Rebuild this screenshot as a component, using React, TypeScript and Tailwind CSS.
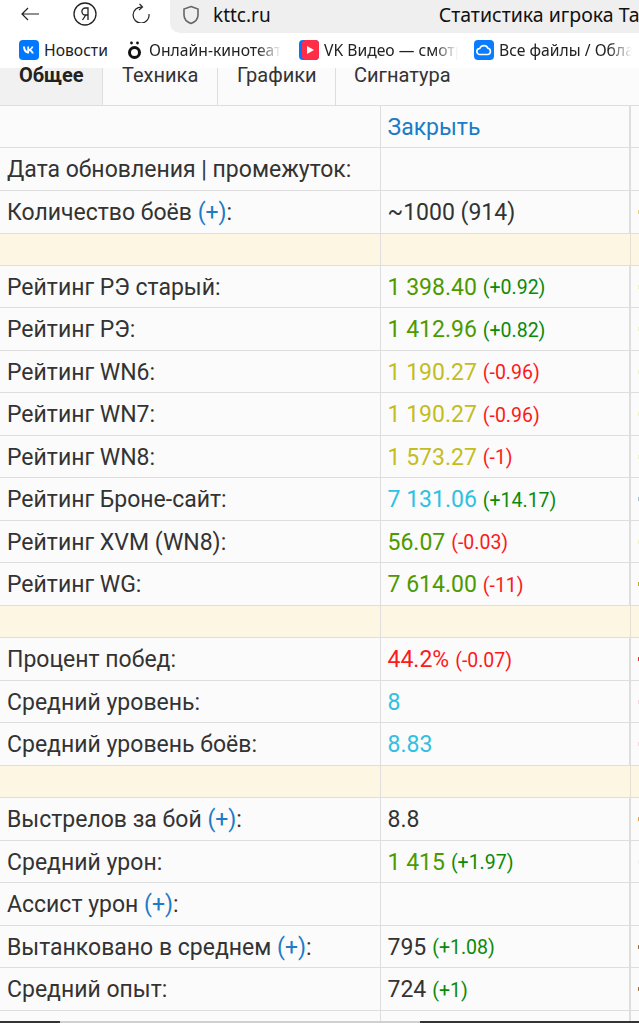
import React from "react";

const Plus = () => <span className="text-[#1c7cc7]">(+)</span>;

type Row = { label?: React.ReactNode; value?: React.ReactNode; delta?: string; color?: string; deltaColor?: string; h: string; sep?: boolean; edge?: string };

const G = "text-[#4c9a00]", Y = "text-[#c4bd22]", C = "text-[#2fc1e2]", R = "text-[#fc1a1a]", DG = "text-[#0a8a0a]", DR = "text-[#fc1a1a]";

const rows: Row[] = [
  { label: "Дата обновления | промежуток:", h: "h-[43px]" },
  { label: <>Количество боёв <Plus />:</>, value: "~1000 (914)", h: "h-[43px]", edge: "bg-[#f0d080]" },
  { sep: true, h: "h-[32px]" },
  { label: "Рейтинг РЭ старый:", value: "1 398.40", color: G, delta: "(+0.92)", deltaColor: DG, h: "h-[42px]", edge: "bg-[#f5efc0]" },
  { label: "Рейтинг РЭ:", value: "1 412.96", color: G, delta: "(+0.82)", deltaColor: DG, h: "h-[43px]", edge: "bg-[#f5efc0]" },
  { label: "Рейтинг WN6:", value: "1 190.27", color: Y, delta: "(-0.96)", deltaColor: DR, h: "h-[42px]", edge: "bg-[#f5efc0]" },
  { label: "Рейтинг WN7:", value: "1 190.27", color: Y, delta: "(-0.96)", deltaColor: DR, h: "h-[43px]", edge: "bg-[#f5efc0]" },
  { label: "Рейтинг WN8:", value: "1 573.27", color: Y, delta: "(-1)", deltaColor: DR, h: "h-[42px]", edge: "bg-[#f5efc0]" },
  { label: "Рейтинг Броне-сайт:", value: "7 131.06", color: C, delta: "(+14.17)", deltaColor: DG, h: "h-[43px]", edge: "bg-[#a5c5d0]" },
  { label: "Рейтинг XVM (WN8):", value: "56.07", color: G, delta: "(-0.03)", deltaColor: DR, h: "h-[42px]", edge: "bg-[#f5efc0]" },
  { label: "Рейтинг WG:", value: "7 614.00", color: G, delta: "(-11)", deltaColor: DR, h: "h-[43px]", edge: "bg-[#b5b020]" },
  { sep: true, h: "h-[32px]" },
  { label: "Процент побед:", value: "44.2%", color: R, delta: "(-0.07)", deltaColor: DR, h: "h-[43px]", edge: "bg-[#f03030]" },
  { label: "Средний уровень:", value: "8", color: C, h: "h-[42px]", edge: "bg-[#fbd5dc]" },
  { label: "Средний уровень боёв:", value: "8.83", color: C, h: "h-[43px]", edge: "bg-[#fbd5dc]" },
  { sep: true, h: "h-[32px]" },
  { label: <>Выстрелов за бой <Plus />:</>, value: "8.8", h: "h-[43px]", edge: "bg-[#e8a050]" },
  { label: "Средний урон:", value: "1 415", color: G, delta: "(+1.97)", deltaColor: DG, h: "h-[42px]", edge: "bg-[#f7efe5]" },
  { label: <>Ассист урон <Plus />:</>, h: "h-[43px]" },
  { label: <>Вытанковано в среднем <Plus />:</>, value: "795", delta: "(+1.08)", deltaColor: DG, h: "h-[42px]", edge: "bg-[#a07040]" },
  { label: "Средний опыт:", value: "724", delta: "(+1)", deltaColor: DG, h: "h-[43px]", edge: "bg-[#a07040]" },
];

const Cells = ({ r }: { r: Row }) => (
  <div className={`flex ${r.h} shrink-0 border-b border-[#dedede] ${r.sep ? "bg-[#fdf6e3]" : "bg-[#fbfbfb]"}`}>
    <div className="flex w-[381px] shrink-0 items-center border-r border-[#dedede] pl-[7px] pt-[3px] text-[#333]">
      <span>{r.label}</span>
    </div>
    <div className={`flex w-[250px] shrink-0 items-center gap-[6px] pl-[7px] pt-[3px] text-[#333] ${r.sep ? "border-r border-[#e2dfd2]" : "border-r-2 border-[#dedede]"}`}>
      <span className={`-ml-[0.5px] ${r.color ?? ""}`}>{r.value}</span>
      {r.delta && <span className={`text-[19.500px] ${r.deltaColor}`}>{r.delta}</span>}
    </div>
    <div className="flex flex-1 items-center justify-end">
      {r.edge && <div className={`h-[4px] w-[1px] ${r.edge}`} />}
    </div>
  </div>
);

const Bookmark = ({ icon, text, w, gap, fade }: { icon: React.ReactNode; text: string; w: string; gap: string; fade?: boolean }) => (
  <div className={`flex ${w} shrink-0 items-center ${gap} overflow-hidden whitespace-nowrap`}>
    {icon}
    <span className={`min-w-0 overflow-hidden text-[#222] ${fade ? "[mask-image:linear-gradient(to_right,black_82%,transparent)]" : ""}`}>{text}</span>
  </div>
);

const Tab = ({ children, active, w }: { children: React.ReactNode; active?: boolean; w: string }) => (
  <div className={`${w} shrink-0 border-r border-[#dedede] pl-[19px] ${active ? "bg-[#f1f1f1] font-bold text-[#222]" : "text-[#333]"}`}>{children}</div>
);

export default function App() {
  return (
    <div className="flex h-[1023px] w-[639px] flex-col overflow-hidden bg-white font-['Roboto',sans-serif] text-[23px]">
      <div className="flex h-[33px] shrink-0 items-start bg-white">
        <svg width="18" height="14" viewBox="0 0 18 14" fill="none" stroke="#222" strokeWidth="1.2" className="ml-[21px] mt-[7px] shrink-0">
          <path d="M18 7H1M7 1L1 7l6 6" />
        </svg>
        <svg width="24" height="24" viewBox="0 0 24 24" fill="none" stroke="#222" strokeWidth="1.3" className="ml-[34px] mt-[2px] shrink-0">
          <circle cx="12" cy="12" r="11" />
          <path d="M15 18V6h-2.600a3.400 3.400 0 0 0 0 7H15M12.800 13L9.500 18" />
        </svg>
        <svg width="20" height="20" viewBox="0 0 20 20" fill="none" stroke="#222" strokeWidth="1.2" className="ml-[34px] mt-[3px] shrink-0">
          <path d="M11 4.100A8 8 0 1 0 18 11" />
          <path d="M8.500 0.800L11.500 4L8 7" />
        </svg>
        <div className="ml-[19px] flex h-[33px] min-w-0 flex-1 items-center overflow-hidden whitespace-nowrap rounded-bl-[10px] bg-[#efefef] pb-[3px] font-['Noto_Sans',sans-serif] text-[19px] text-[#111]">
          <svg width="18" height="20" viewBox="0 0 18 20" fill="none" stroke="#666" strokeWidth="1.6" className="ml-[12px] shrink-0">
            <path d="M9 1.500l7 2.500v6c0 4-3 7-7 8.500c-4-1.500-7-4.500-7-8.500V4z" />
          </svg>
          <span className="ml-[13px]">kttc.ru</span>
          <span className="ml-[168px] text-[19.500px]">Статистика игрока Та</span>
        </div>
      </div>
      <div className="flex h-[35px] shrink-0 items-center bg-white pl-[19px] font-['Noto_Sans',sans-serif] text-[15.700px]">
        <Bookmark
          w="w-[108px]"
          gap="gap-[5px]"
          text="Новости"
          icon={
            <svg width="20" height="20" viewBox="0 0 20 20" className="shrink-0">
              <rect width="20" height="20" rx="4" fill="#0077ff" />
              <path d="M4 6.500h2c.2 3 1.300 4.200 2.300 4.500V6.500h1.800V9c1-.1 2-1.200 2.500-2.500h1.800c-.3 1.600-1.500 2.800-2.400 3.300.9.400 2.200 1.500 2.800 3.700h-2c-.4-1.300-1.500-2.400-2.700-2.500v2.500h-.3C6.300 13.500 4.200 11 4 6.500z" fill="#fff" />
            </svg>
          }
        />
        <Bookmark
          fade
          w="w-[156px] mr-[16px]"
          gap="gap-[7px]"
          text="Онлайн-кинотеат"
          icon={
            <svg width="15" height="20" viewBox="0 0 15 20" className="shrink-0">
              <circle cx="7.500" cy="12.500" r="5" fill="none" stroke="#111" strokeWidth="3" />
              <circle cx="4.500" cy="3" r="1.400" fill="#111" />
              <circle cx="10.500" cy="3" r="1.400" fill="#111" />
            </svg>
          }
        />
        <Bookmark
          fade
          w="w-[159px] mr-[16px]"
          gap="gap-[5px]"
          text="VK Видео — смотр"
          icon={
            <svg width="20" height="20" viewBox="0 0 20 20" className="shrink-0">
              <rect width="20" height="20" rx="4" fill="#0077ff" />
              <rect x="3" width="17" height="20" rx="4" fill="#ff2d46" />
              <path d="M8 6l7 4-7 4z" fill="#fff" />
            </svg>
          }
        />
        <Bookmark
          fade
          w="w-[158px]"
          gap="gap-[5px]"
          text="Все файлы / Обла"
          icon={
            <svg width="20" height="20" viewBox="0 0 20 20" className="shrink-0">
              <rect width="20" height="20" rx="4" fill="#0a7cff" />
              <path d="M6 14.500a3 3 0 0 1-.3-6A4.500 4.500 0 0 1 14 8.300a3.200 3.200 0 0 1 0 6.200z" fill="none" stroke="#fff" strokeWidth="1.600" />
            </svg>
          }
        />
      </div>
      <div className="flex h-[38px] shrink-0 border-b border-[#dedede] bg-[#fbfbfb] text-[20px] leading-[14px]">
        <Tab active w="w-[103px]">Общее</Tab>
        <Tab w="w-[115px]">Техника</Tab>
        <Tab w="w-[118px]">Графики</Tab>
        <div className="pl-[18px] text-[#333]">Сигнатура</div>
      </div>
      <Cells r={{ value: <span className="text-[#1c7cc7]">Закрыть</span>, h: "h-[42px]" }} />
      {rows.map((r, i) => (
        <Cells key={i} r={r} />
      ))}
      <div className="flex flex-1 bg-[#fbfbfb]">
        <div className="w-[381px] border-r border-[#dedede]" />
        <div className="w-[250px] border-r-2 border-[#dedede]" />
      </div>
      <div className="flex h-[2px] shrink-0 bg-[#d0d0d0]">
        <div className="w-[60px] bg-[#333]" />
        <div className="w-[360px]" />
        <div className="flex-1 bg-[#333]" />
      </div>
    </div>
  );
}
